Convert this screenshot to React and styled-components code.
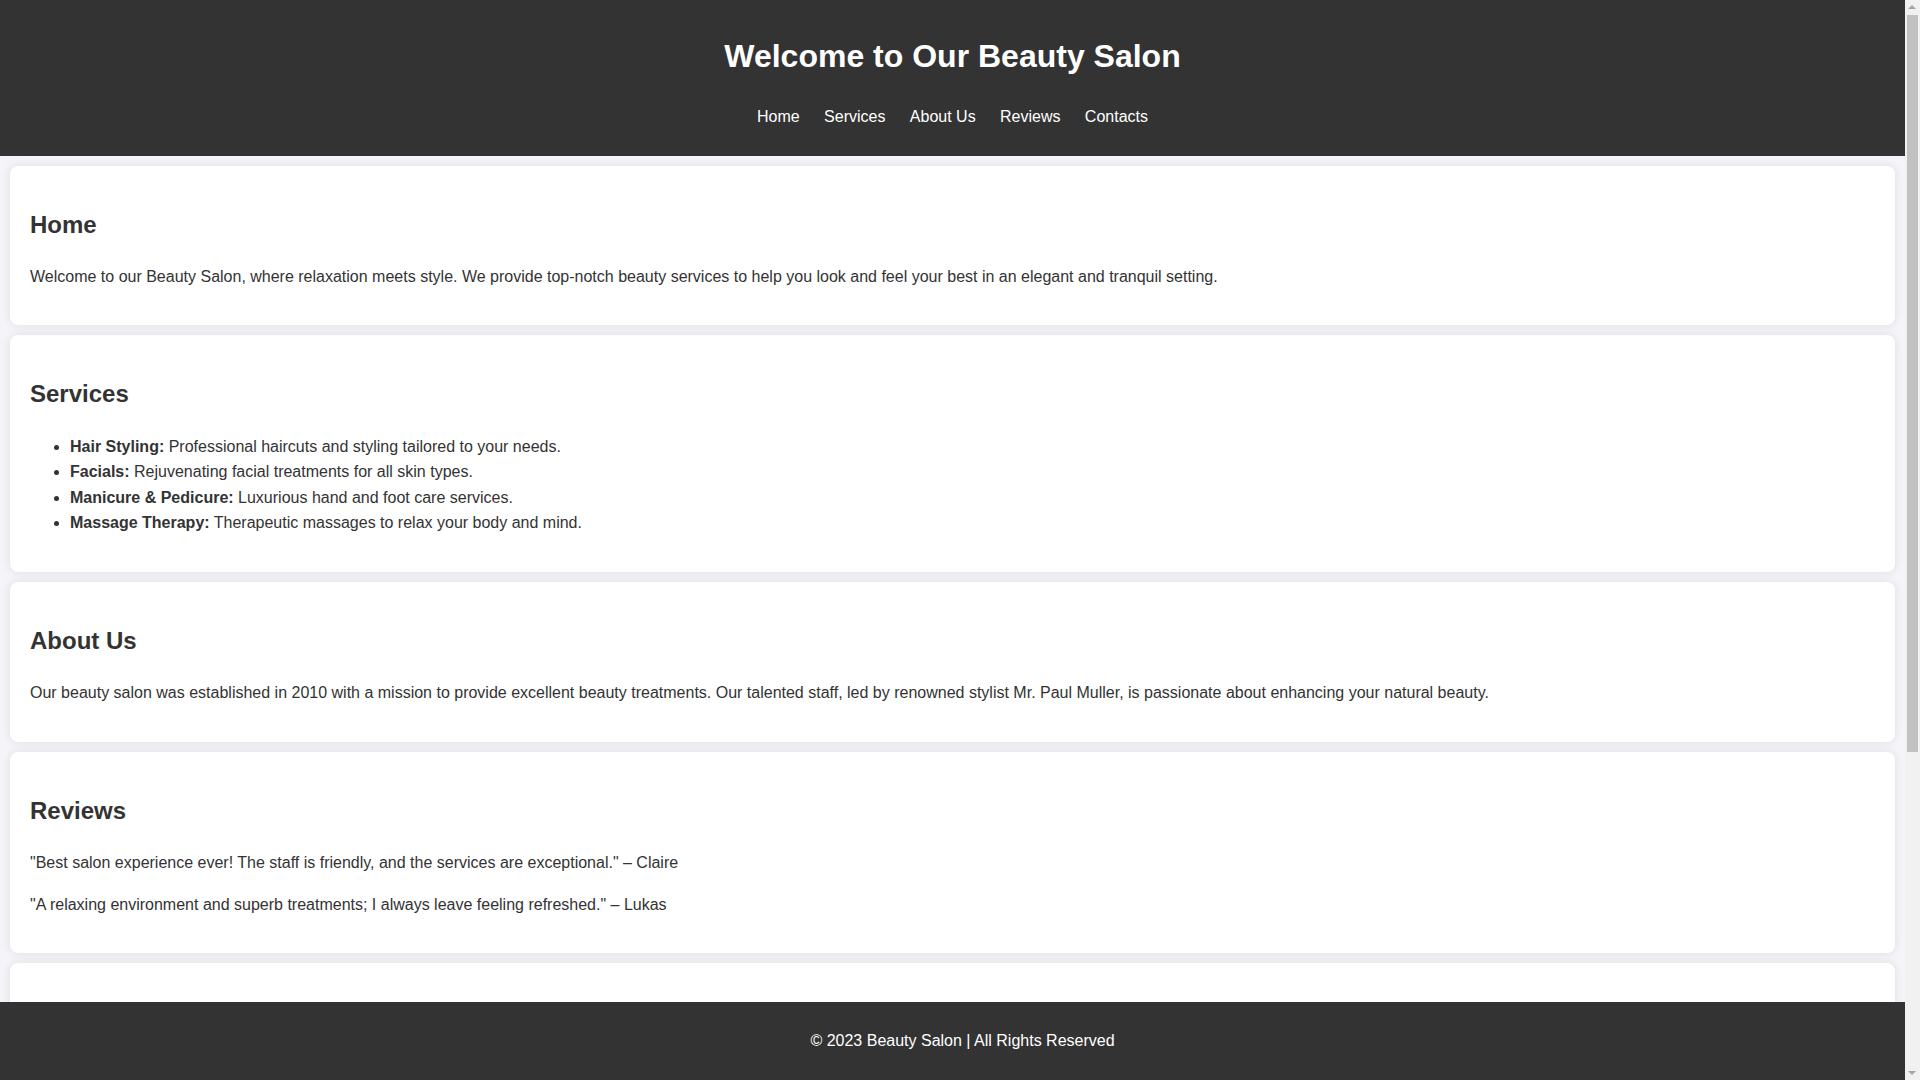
import React from 'react';
import styled, { createGlobalStyle } from 'styled-components';

const GlobalStyle = createGlobalStyle`
  html {
    scrollbar-width: none;
  }
  body {
    margin: 0;
    padding: 0;
    font-family: "Liberation Sans", Arial, sans-serif;
    line-height: 1.6;
    background-color: #f4f4f9;
    color: #333;
  }
`;

// the page in the reference is laid out beside a 15px browser scrollbar
const Page = styled.div`
  width: calc(100vw - 15px);
`;

const Header = styled.header`
  background-color: #333;
  color: #fff;
  padding: 10px 0;
  text-align: center;
`;

const Title = styled.h1`
  font-size: 32px;
  margin: 21.44px 0;
`;

const NavList = styled.ul`
  list-style: none;
  padding: 0;
  margin: 16px 0;
`;

const NavItem = styled.li`
  display: inline;
  margin: 0 12.2px;
`;

const NavLink = styled.a`
  color: #fff;
  text-decoration: none;
  &:hover {
    text-decoration: underline;
  }
`;

const Section = styled.section`
  background-color: #fff;
  margin: 10px;
  padding: 20px;
  border-radius: 8px;
  box-shadow: 0 0 10px rgba(0, 0, 0, 0.1);
`;

const H2 = styled.h2`
  font-size: 24px;
  margin: 19.92px 0;
`;

const Text = styled.p`
  margin: 16px 0;
`;

const List = styled.ul`
  margin: 16px 0;
  padding-left: 40px;
`;

const Form = styled.form`
  display: flex;
  flex-direction: column;
  gap: 12px;
  max-width: 500px;
  margin-bottom: 16px;
`;

const Input = styled.input`
  padding: 10px;
  border: 1px solid #ccc;
  border-radius: 4px;
  font: inherit;
`;

const Area = styled.textarea`
  padding: 10px;
  border: 1px solid #ccc;
  border-radius: 4px;
  font: inherit;
  height: 120px;
`;

const Submit = styled.button`
  align-self: flex-start;
  background-color: #333;
  color: #fff;
  border: none;
  border-radius: 4px;
  padding: 10px 20px;
  font: inherit;
`;

const Main = styled.main`
  padding-bottom: 90px;
`;

const Footer = styled.footer`
  background-color: #333;
  color: #fff;
  text-align: center;
  padding: 10px;
  position: fixed;
  bottom: 0;
  left: 0;
  width: calc(100vw - 15px);
`;

const Scrollbar = styled.div`
  position: fixed;
  top: 0;
  right: 0;
  width: 15px;
  height: 100vh;
  background: #f1f1f1;
  z-index: 10;
`;

const Arrow = styled.div`
  position: absolute;
  left: 3px;
  width: 0;
  height: 0;
  border-left: 4px solid transparent;
  border-right: 4px solid transparent;
  ${({ $down }) =>
    $down
      ? 'bottom: 5px; border-top: 4px solid #a3a3a3;'
      : 'top: 5px; border-bottom: 4px solid #a3a3a3;'}
`;

const Thumb = styled.div`
  position: absolute;
  left: 2px;
  right: 2px;
  top: 15px;
  height: 737px;
  background: #c1c1c1;
`;

const navItems = ['Home', 'Services', 'About Us', 'Reviews', 'Contacts'];

const services = [
  ['Hair Styling:', 'Professional haircuts and styling tailored to your needs.'],
  ['Facials:', 'Rejuvenating facial treatments for all skin types.'],
  ['Manicure & Pedicure:', 'Luxurious hand and foot care services.'],
  ['Massage Therapy:', 'Therapeutic massages to relax your body and mind.'],
];

export default function App() {
  return (
    <Page>
      <GlobalStyle />
      <Header>
        <Title>Welcome to Our Beauty Salon</Title>
        <nav>
          <NavList>
            {navItems.map((item) => (
              <NavItem key={item}>
                <NavLink href={`#${item.toLowerCase().replace(' ', '')}`}>{item}</NavLink>
              </NavItem>
            ))}
          </NavList>
        </nav>
      </Header>
      <Main>
        <Section id="home">
          <H2>Home</H2>
          <Text>
            Welcome to our Beauty Salon, where relaxation meets style. We provide top-notch beauty services to help you look and feel your best in an elegant and tranquil setting.
          </Text>
        </Section>
        <Section id="services">
          <H2>Services</H2>
          <List>
            {services.map(([name, desc]) => (
              <li key={name}>
                <strong>{name}</strong> {desc}
              </li>
            ))}
          </List>
        </Section>
        <Section id="aboutus">
          <H2>About Us</H2>
          <Text>
            Our beauty salon was established in 2010 with a mission to provide excellent beauty treatments. Our talented staff, led by renowned stylist Mr. Paul Muller, is passionate about enhancing your natural beauty.
          </Text>
        </Section>
        <Section id="reviews">
          <H2>Reviews</H2>
          <Text>"Best salon experience ever! The staff is friendly, and the services are exceptional." – Claire</Text>
          <Text>"A relaxing environment and superb treatments; I always leave feeling refreshed." – Lukas</Text>
        </Section>
        <Section id="contacts">
          <H2>Contacts</H2>
          <Text>Address: 123 Beauty Street, Berlin</Text>
          <Text>Phone: +49 30 123456</Text>
          <Text>Email: info@beautysalon.com</Text>
          <Form onSubmit={(e) => e.preventDefault()}>
            <Input type="text" placeholder="Your Name" />
            <Input type="email" placeholder="Your Email" />
            <Area placeholder="Your Message" />
            <Submit type="submit">Send</Submit>
          </Form>
        </Section>
      </Main>
      <Footer>
        <Text>© 2023 Beauty Salon | All Rights Reserved</Text>
      </Footer>
      <Scrollbar>
        <Arrow />
        <Thumb />
        <Arrow $down />
      </Scrollbar>
    </Page>
  );
}
